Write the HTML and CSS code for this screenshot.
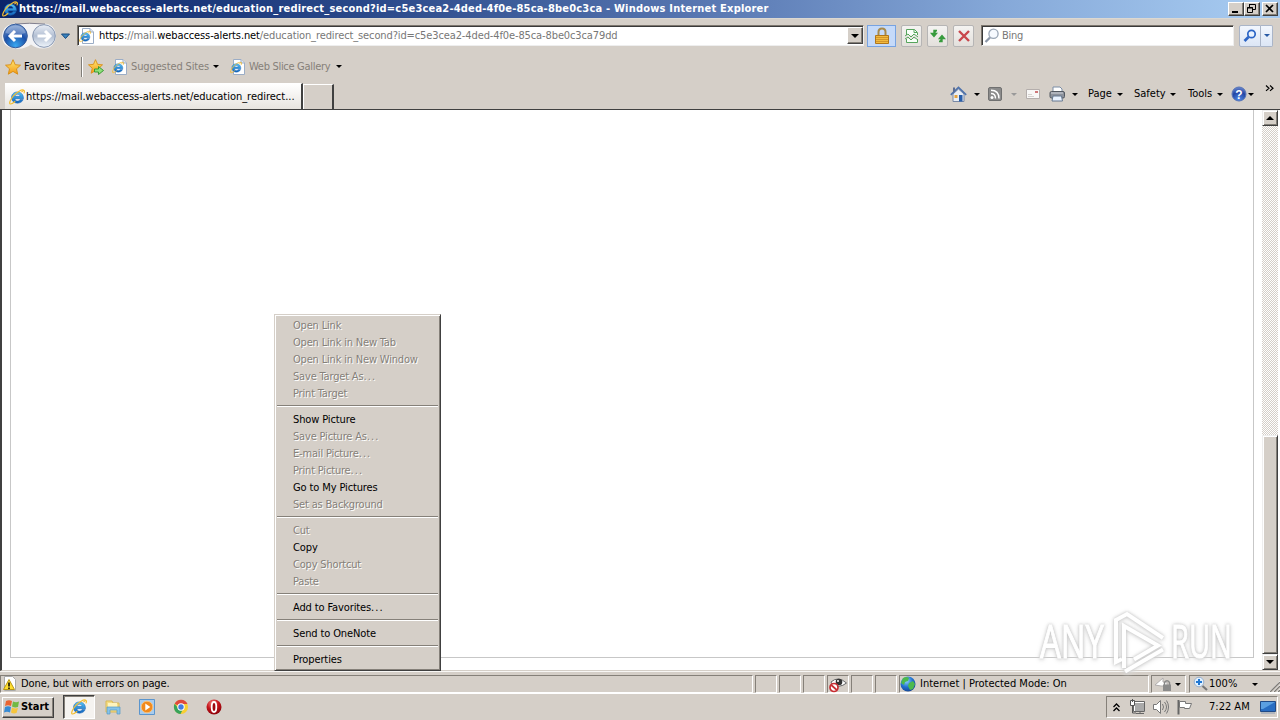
FILE: index.html
```html
<!DOCTYPE html>
<html lang="en">
<head>
<meta charset="utf-8">
<title>Windows Internet Explorer</title>
<link rel="stylesheet" href="styles.css">
</head>
<body>
<svg class="defs" aria-hidden="true">
  <defs>
    <linearGradient id="eBlue" x1="0" y1="0" x2="0" y2="1"><stop offset="0" stop-color="#54c4f6"/><stop offset="1" stop-color="#1263bd"/></linearGradient>
    <radialGradient id="backBlue" cx=".5" cy=".9" r=".9"><stop offset="0" stop-color="#38a7f0"/><stop offset=".55" stop-color="#1c50a8"/><stop offset="1" stop-color="#7d9fd2"/></radialGradient>
    <linearGradient id="fwdGrey" x1="0" y1="0" x2="0" y2="1"><stop offset="0" stop-color="#e9eef6"/><stop offset=".5" stop-color="#b3bfd3"/><stop offset="1" stop-color="#eff5fb"/></linearGradient>
    <linearGradient id="gold" x1="0" y1="0" x2="0" y2="1"><stop offset="0" stop-color="#ffe873"/><stop offset="1" stop-color="#f39a16"/></linearGradient>
    <radialGradient id="globe" cx=".4" cy=".3" r=".8"><stop offset="0" stop-color="#8fd4ff"/><stop offset=".5" stop-color="#2272cf"/><stop offset="1" stop-color="#103a85"/></radialGradient>
    <radialGradient id="helpBlue" cx=".5" cy=".9" r=".9"><stop offset="0" stop-color="#4f8be8"/><stop offset=".6" stop-color="#2346a5"/><stop offset="1" stop-color="#6f8bd0"/></radialGradient>
    <radialGradient id="operaRed" cx=".4" cy=".25" r=".8"><stop offset="0" stop-color="#f4807c"/><stop offset=".5" stop-color="#c4141b"/><stop offset="1" stop-color="#850007"/></radialGradient>
    <symbol id="ie" viewBox="0 0 16 16">
      <path d="M14.500 9.700H6c.2 3 3.900 3.100 5 .9h3.200C12.200 16 2.500 15.300 2.500 8.600 2.500.9 14.900.8 14.500 9.700zM6 7.300h5c-.2-2.600-4.700-2.600-5 0z" fill="url(#eBlue)" stroke="#1763b4" stroke-width=".5"/>
      <path d="M12.400 3.200C15 .6 16.200.9 14.900 4.400M4.300 7C1.200 10.900-.1 14.300 1.200 14.900c1 .4 3-.9 5-2.700M4.300 7C7.500 3.300 13.200-.4 14.900 1.500" fill="none" stroke="#f3bd32" stroke-width="1.200"/>
    </symbol>
    <symbol id="iepage" viewBox="0 0 16 16"><path d="M3.500.5H11l3.500 3.500v11.500h-11z" fill="#fff" stroke="#9badc6"/><path d="M11 .5V4h3.500" fill="#dce5f2" stroke="#9badc6"/><use href="#ie" x="0" y="2.500" width="12" height="12"/></symbol>
    <symbol id="star" viewBox="0 0 16 16"><path d="M8 .7l2.200 5 5.300.5-4 3.600 1.200 5.400L8 12.400l-4.700 2.800 1.200-5.400-4-3.600 5.300-.5z" fill="url(#gold)" stroke="#d78c13" stroke-width=".9"/></symbol>
  </defs>
</svg>

<header class="titlebar">
  <svg class="i16"><use href="#ie"/></svg>
  <h1 class="title">https://mail.webaccess-alerts.net/education_redirect_second?id=c5e3cea2-4ded-4f0e-85ca-8be0c3ca - Windows Internet Explorer</h1>
  <div class="winbtns">
    <span class="winbtn"><svg width="13" height="11"><path d="M3 8h6v2H3z"/></svg></span>
    <span class="winbtn"><svg width="13" height="11"><path d="M4.500 1v3M4 1.500h6.500v5H8M2.500 4.500h5v5h-5zM2 5h6" fill="none" stroke="#000"/></svg></span>
    <span class="winbtn last"><svg width="13" height="11"><path d="M3 2l7 7M10 2L3 9" stroke="#000" stroke-width="1.700"/></svg></span>
  </div>
</header>

<nav class="navbar">
  <svg class="travel" width="74" height="28" viewBox="0 0 74 28">
    <path d="M15 1.500h27q12 0 13 12-1 13-13 13-7 0-12-4-6 5-16 4Q1 25 1 14 2 2 15 1.500z" fill="#f3f3f5"/><path d="M14 2Q28 .5 44 2" stroke="#817f8e" fill="none"/>
    <circle cx="14.500" cy="14" r="11.800" fill="url(#backBlue)" stroke="#345b9b"/><path d="M4.500 11Q6.500 3.500 14.500 3.500T24.500 11Q14.500 14 4.500 11z" fill="#fff" opacity=".28"/>
    <path d="M21 14H9.500M14 9l-5 5 5 5" fill="none" stroke="#fff" stroke-width="3"/>
    <circle cx="43" cy="14" r="11.300" fill="url(#fwdGrey)" stroke="#8796b0"/>
    <path d="M36.500 14h12M44 9l5 5-5 5" fill="none" stroke="#fff" stroke-width="3"/>
    <path d="M60.500 12h8l-4 4.500z" fill="#3a83bd" stroke="#174a80"/>
  </svg>
  <div class="address">
    <svg class="i16"><use href="#iepage"/></svg>
    <span class="url"><b>https</b>://mail.<b>webaccess-alerts.net</b>/education_redirect_second?id=c5e3cea2-4ded-4f0e-85ca-8be0c3ca79dd</span>
    <span class="drop"><i class="tri big"></i></span>
  </div>
  <span class="lock"><svg width="16" height="18" viewBox="0 0 16 18"><path d="M4.500 9V5Q4.500 1.500 8 1.500T11.500 5v4" fill="none" stroke="#a88a4c" stroke-width="2"/><path d="M1.500 8.500h13v8h-13z" fill="#f2bb3f" stroke="#b1761a"/><path d="M2 10.500h12M2 12.500h12M2 14.500h12" stroke="#d2952c"/></svg></span>
  <span class="tool"><svg width="16" height="16"><path d="M2.500 7V1.500h8l3 3V7M2.500 11v3.500h11V11" fill="#f8fff8" stroke="#56a45c"/><path d="M1 8l3-2 3 3 3-3 4 3M1 11l3-2 3 3 3-3 4 3M10 1.500v3h3" fill="none" stroke="#56a45c"/></svg></span>
  <span class="tool"><svg width="18" height="16"><path d="M8 2.500H5V7M2.500 5.500L5 8.500l2.500-3zM10 13.500h3V9M10.500 10.500l2.500-3 2.500 3z" fill="#379b3d" stroke="#379b3d" stroke-width="1.400"/></svg></span>
  <span class="tool"><svg width="16" height="16"><path d="M3 3l10 10M13 3L3 13" stroke="#c9474c" stroke-width="2.400"/></svg></span>
  <div class="search"><svg width="16" height="16"><circle cx="9.500" cy="5.800" r="4.600" fill="#f7faff" stroke="#9aa6b6" stroke-width="1.300"/><path d="M6 9.500L1.500 14" stroke="#8c97a8" stroke-width="2.300"/></svg><span>Bing</span></div>
  <span class="go"><svg width="16" height="16"><circle cx="9.500" cy="6" r="3.700" fill="#e8f2ff" stroke="#2b64c5" stroke-width="1.700"/><path d="M6.500 9L2.500 13" stroke="#2b64c5" stroke-width="2.600"/></svg></span>
  <span class="godrop"><i class="tri blue"></i></span>
</nav>

<div class="favbar">
  <svg class="i16"><use href="#star"/></svg><span class="favlabel">Favorites</span>
  <i class="vline"></i>
  <svg class="i16 addfav"><use href="#star" width="15" height="15"/><path d="M6.500 10h4V7.500l5 4-5 4V13h-4z" fill="#8fe07a" stroke="#2f942c" stroke-width=".9"/></svg>
  <svg class="i16 sug"><use href="#iepage"/></svg><span class="link l1">Suggested Sites</span><i class="tri"></i>
  <svg class="i16 slice"><use href="#iepage"/></svg><span class="link l2">Web Slice Gallery</span><i class="tri"></i>
</div>

<div class="tabrow">
  <div class="tab"><svg class="i16"><use href="#ie"/></svg><span>https://mail.webaccess-alerts.net/education_redirect...</span></div>
  <div class="newtab"></div>
  <div class="commands">
    <svg class="home" width="17" height="17" viewBox="0 0 17 17"><path d="M3 8v7.500h11V8L8.500 3z" fill="#e9eef5" stroke="#7888a5"/><path d="M.8 8.800L8.500 1.500l7.700 7.300" fill="none" stroke="#4f73ac" stroke-width="1.700"/><path d="M3 1.500h2V5L3 6.500z" fill="#5c6d92"/><path d="M4.500 9h3v3h-3z" fill="#e7a33b"/><path d="M9 9h3.500v6.500H9z" fill="#285eaa"/></svg><i class="tri t1"></i>
    <svg class="rss" width="15" height="15"><rect x=".5" y=".5" width="13" height="13" rx="1.500" fill="#8b8b8b" stroke="#707070"/><circle cx="4" cy="10.500" r="1.500" fill="#fff"/><path d="M3 6.500q4.500 0 4.500 5M3 3.200q8 0 8 8.300" fill="none" stroke="#fff" stroke-width="1.400"/></svg><i class="tri grey t2"></i>
    <svg class="mail" width="15" height="11"><path d="M.5.5h13v9H.5z" fill="#f8f7f6" stroke="#b4aeac"/><path d="M2 7.500h6M2 5.500h4" stroke="#d5d1ce"/><path d="M9 2h3v2H9z" fill="#cf7778"/></svg>
    <svg class="print" width="17" height="16"><path d="M4 7V1h7l2 2v4" fill="#fff" stroke="#7b8da6"/><rect x="1" y="5.500" width="14.500" height="6.500" rx="1.500" fill="#8d929c" stroke="#525861"/><path d="M2 7h12" stroke="#d1d5dc"/><path d="M4 10h8.500l1 5H3z" fill="#e9f2ff" stroke="#667990"/></svg><i class="tri t3"></i>
    <span class="cmd page">Page</span><i class="tri t4"></i><span class="cmd safety">Safety</span><i class="tri t5"></i><span class="cmd tools">Tools</span><i class="tri t6"></i>
    <svg class="help" width="16" height="16"><circle cx="8" cy="8" r="7" fill="url(#helpBlue)" stroke="#5573b6"/><text x="8" y="12.500" class="q">?</text></svg><i class="tri t7"></i>
    <svg class="more" width="9" height="7"><path d="M1 .5l3 2.700-3 2.700M5 .5l3 2.700-3 2.700" fill="none" stroke="#000" stroke-width="1.200"/></svg>
  </div>
</div>

<main class="view">
  <div class="frame"></div>
  <div class="scroll"><span class="sbtn"><i class="tri big up"></i></span><span class="track"></span><span class="thumb"></span><span class="sbtn"><i class="tri big"></i></span></div>
  <svg class="watermark" width="212" height="72" viewBox="0 0 212 72">
    <g class="wm"><text x="7" y="50" textLength="64" lengthAdjust="spacingAndGlyphs">ANY</text><text x="138" y="50" textLength="61" lengthAdjust="spacingAndGlyphs">RUN</text>
    <path d="M89 51l-6 3V12L94 6l36 24M91 60V18l34 19.500-24 14M92 63.500l38-22"/></g>
  </svg>
</main>

<footer class="status">
  <div class="pane p0"><svg class="i16"><path d="M2.500.5h8l3 3v11h-11z" fill="#fff" stroke="#aaa"/><path d="M7 3.500l5.500 10h-11z" fill="#ffdf2f" stroke="#b99613"/><path d="M7 6.500v4M7 11.500V13" stroke="#000" stroke-width="1.500"/></svg><span class="s-done">Done, but with errors on page.</span></div>
  <div class="pane sm"></div><div class="pane sm"></div><div class="pane sm"></div>
  <div class="pane sm"><svg width="20" height="17"><path d="M3 6Q10-.5 18.500 7 11 13 4 8z" fill="#fff" stroke="#666"/><circle cx="11" cy="6" r="3.300" fill="#333"/><circle cx="10" cy="5" r="1" fill="#fff"/><circle cx="6" cy="11.500" r="4" fill="#fff" stroke="#c82e33" stroke-width="1.700"/><path d="M3.200 9l5.600 5" stroke="#c82e33" stroke-width="1.700"/></svg></div>
  <div class="pane sm"></div><div class="pane sm"></div>
  <div class="pane zone"><svg class="i16"><circle cx="8" cy="8" r="7.500" fill="url(#globe)"/><path d="M3 2q4-2 6 0L8 5 5 6 4 9 1 7zM9 7l4-2 2 3-2 5-3 1-2-4z" fill="#4bb94d"/></svg><span class="s-zone">Internet | Protected Mode: On</span></div>
  <div class="pane prot"><svg width="18" height="16"><path d="M0 9l8-7v4h4v4H6z" fill="#fff" stroke="#b0adad"/><path d="M9.500 9V6.500Q12 3 14.500 6.500V9" fill="none" stroke="#888" stroke-width="1.400"/><path d="M8 8.500h8V15H8z" fill="#8b8b8b"/></svg><i class="tri"></i></div>
  <div class="pane zoom"><svg class="i16"><circle cx="6" cy="6" r="4.800" fill="#e0f0ff" stroke="#9aafc9"/><path d="M6 3v6M3 6h6" stroke="#2378d2" stroke-width="2"/><path d="M9.500 10l4.500 4" stroke="#777" stroke-width="2.200"/></svg><span>100%</span><i class="tri"></i>
    <svg class="grip" width="12" height="12"><path d="M1 12L12 1M5 12l7-7M9 12l3-3" stroke="#fff" /><path d="M2 12L12 2M6 12l6-6M10 12l2-2" stroke="#7f7c77" stroke-width="1.400"/></svg></div>
</footer>

<footer class="taskbar">
  <div class="start"><svg width="17" height="16"><path d="M2 2q3-1.500 6 0L7 7Q4 5.500 1 7z" fill="#ea6431"/><path d="M9 2.500q3 1.500 6 0L14 8q-3 1-6-.5z" fill="#72b942"/><path d="M1 8q3-1.500 6 0l-1 5.500q-3-1.500-6 0z" fill="#378bd4"/><path d="M8 8.500q3 1.500 6 .5l-1.500 5q-3 1-5.500-.5z" fill="#f6c53c"/></svg><b>Start</b></div>
  <div class="active"><svg class="i16"><use href="#ie"/></svg></div>
  <svg class="i16 folder"><path d="M1 2h6l1 2h6v9H1z" fill="#f5dc82" stroke="#d9b957"/><path d="M3 4h9v5H3z" fill="#fff4bd"/><path d="M2 8h13v7h-3v-4H5v4H2z" fill="#86c3e9" stroke="#5498c5" stroke-width=".7"/></svg>
  <svg class="i16 wmp"><path d="M.5.5h15v15H.5z" fill="#a9cced" stroke="#5b95cd"/><circle cx="8" cy="8" r="5.800" fill="#f18a1d" stroke="#f9c078"/><path d="M6.300 4.500v7l5-3.500z" fill="#fff"/></svg>
  <svg class="i16 chrome" viewBox="0 0 16 16"><circle cx="8" cy="8" r="7" fill="#f8cf32"/><path d="M8 8L1.700 4.700A7 7 0 0 1 14.500 5H8z" fill="#df493c"/><path d="M1.700 4.700A7 7 0 0 0 7.500 15l3-6L5 9z" fill="#38a35a"/><circle cx="8" cy="8" r="3.700" fill="#fff"/><circle cx="8" cy="8" r="2.700" fill="#437de1"/></svg>
  <svg class="i16 opera" viewBox="0 0 16 16"><circle cx="8" cy="8" r="7.500" fill="url(#operaRed)"/><ellipse cx="8" cy="8" rx="2.300" ry="5" fill="#9d0a10" stroke="#fff" stroke-width="1.800"/></svg>
  <div class="tray">
    <svg class="chev" width="7" height="9"><path d="M.5 4l3-3 3 3M.5 8l3-3 3 3" fill="none" stroke="#000" stroke-width="1.300"/></svg>
    <svg class="net" width="17" height="16"><path d="M5.500 3.500h10v9h-10z" fill="#aaa" stroke="#fff"/><path d="M4.500 2.500h11v10h-11zM7 14.500h8M11 12v3" fill="none" stroke="#666"/><path d="M1.500 1.500h4v5h-4z" fill="#fff" stroke="#555"/><path d="M3.500 6v8H7M3.500 0v3" fill="none" stroke="#555"/></svg>
    <svg class="vol" width="18" height="16"><path d="M1.500 5.500h3l4-4v13l-4-4h-3z" fill="#fff" stroke="#777"/><path d="M10.500 5q2 3 0 6M12.500 3q4 5 0 10M14.500 1.500q4 6.500 0 13" fill="none" stroke="#777"/></svg>
    <svg class="flag" width="17" height="16"><path d="M2.500 1v14.500" stroke="#666" stroke-width="2"/><path d="M3.500 2.500h6v2h6l-2 5h-5v-1h-5z" fill="#fff" stroke="#777"/></svg>
    <span class="clock">7:22 AM</span>
    <svg class="desk" width="16" height="13"><path d="M.5.5h15v10H.5z" fill="#286dc2" stroke="#204a87"/><path d="M1 1h14L3 8H1z" fill="#5b9fe1"/><path d="M1 12h14" stroke="#8b9cb3"/></svg>
  </div>
</footer>

<ul class="menu">
  <li class="off">Open Link</li><li class="off">Open Link in New Tab</li><li class="off">Open Link in New Window</li><li class="off">Save Target As<span class="dots">...</span></li><li class="off">Print Target</li>
  <li class="sep"></li>
  <li>Show Picture</li><li class="off">Save Picture As<span class="dots">...</span></li><li class="off">E-mail Picture<span class="dots">...</span></li><li class="off">Print Picture<span class="dots">...</span></li><li>Go to My Pictures</li><li class="off">Set as Background</li>
  <li class="sep"></li>
  <li class="off">Cut</li><li>Copy</li><li class="off">Copy Shortcut</li><li class="off">Paste</li>
  <li class="sep"></li><li>Add to Favorites<span class="dots">...</span></li>
  <li class="sep"></li><li>Send to OneNote</li>
  <li class="sep"></li><li>Properties</li>
</ul>
</body>
</html>
```
FILE: styles.css
```css
* { box-sizing: border-box; }
body { margin: 0; width: 1280px; height: 720px; overflow: hidden; display: flex; flex-direction: column; background: #d5cfc8; color: #000; font: 11px/14px "DejaVu Sans Condensed", "DejaVu Sans", sans-serif; font-stretch: condensed; white-space: nowrap; position: relative; }
svg { display: block; flex: none; }
.defs { position: absolute; width: 0; height: 0; }
.i16 { width: 16px; height: 16px; }

.titlebar { height: 18px; flex: none; display: flex; align-items: center; padding: 0 2px; background: linear-gradient(90deg, #0a246a 0%, #294889 28%, #5675b0 54%, #85a8d8 78%, #a6caf0 98%); }
.title { margin: 0 auto 0 1px; font-size: 11px; line-height: 16px; color: #fff; letter-spacing: .2px; }
.winbtns { display: flex; }
.winbtn { width: 16px; height: 14px; border: 1px solid; border-color: #fff #404040 #404040 #fff; background: #d5cfc8; box-shadow: inset -1px -1px #858078; }
.winbtn.last { margin-left: 2px; }

.navbar { height: 36px; flex: none; display: flex; align-items: center; padding: 0 0 2px 1px; border-top: 1px solid #dcd8d1; }
.navbar > * { flex: none; }
.travel { margin-right: 2px; }
.address { width: 787px; height: 21px; display: flex; align-items: center; background: #fff; border: 1px solid; border-color: #7c766e #eee #eee #7c766e; box-shadow: inset 1px 1px #393939; padding-left: 1px; }
.url { margin-left: 4px; color: #777; letter-spacing: -.115px; }
.url b { color: #000; font-weight: normal; }
.drop { margin-left: auto; width: 16px; height: 17px; display: grid; place-items: center; background: #d5cfc8; border: 1px solid; border-color: #fff #444 #444 #fff; box-shadow: inset -1px -1px #858078; }
.tri { flex: none; border: 3px solid transparent; border-top-color: #000; border-bottom: 0; width: 0; height: 0; }
.tri.big { border-width: 4px 4px 0; }
.tri.up { transform: scaleY(-1); }
.tri.blue { border-top-color: #285aa5; }
.tri.grey { border-top-color: #999; }
.lock { width: 29px; height: 22px; margin: 0 5px 0 3px; display: grid; place-items: center; background: #c5daf9; border: 1px solid #77a3e1; }
.tool { width: 21px; height: 22px; margin-right: 5px; display: grid; place-items: center; background: linear-gradient(#f4f3f1, #e3e0dc); border: 1px solid #b6b5b5; border-radius: 2px; }
.search { width: 253px; height: 21px; margin: 0 5px 0 2px; display: flex; align-items: center; background: #fff; color: #777; border: 1px solid; border-color: #7c766e #eee #eee #7c766e; box-shadow: inset 1px 1px #393939; padding-left: 2px; }
.search span { margin-left: 2px; letter-spacing: -.3px; }
.go, .godrop { height: 22px; display: grid; place-items: center; background: linear-gradient(#f2f6fd, #dce6f5); border: 1px solid #aab5c8; }
.go { width: 22px; border-radius: 2px 0 0 2px; }
.godrop { width: 12px; border-left: 0; border-radius: 0 2px 2px 0; }

.favbar { height: 27px; flex: none; display: flex; align-items: center; padding: 0 5px 2px; }
.favlabel { margin-left: 3px; width: 57px; letter-spacing: .15px; }
.vline { width: 2px; height: 20px; border-left: 1px solid #807d77; border-right: 1px solid #fff; margin-right: 5px; }
.sug { margin: 0 3px 0 8px; }
.slice { margin: 0 3px 0 11px; }
.link { color: #858079; }
.l1 { width: 82px; letter-spacing: -.12px; }
.l2 { width: 87px; letter-spacing: -.3px; }

.tabrow { height: 28px; flex: none; display: flex; align-items: flex-end; padding-left: 5px; }
.tab { width: 298px; height: 26px; display: flex; align-items: center; padding-left: 4px; background: linear-gradient(#fff, #e7e4df); border-right: 2px solid #404040; border-top: 1px solid #fff; }
.tab span { margin-left: 1px; letter-spacing: -.02px; }
.newtab { width: 31px; height: 25px; border: 1px solid #fff; border-right: 2px solid #404040; border-bottom: 0; }
.commands { align-self: flex-start; height: 26px; display: flex; align-items: center; margin-left: 616px; }
.t1 { margin: 0 8px 0 7px; }
.t2 { margin: 0 9px 0 8px; }
.mail { margin-right: 8px; }
.t3 { margin: 0 10px 0 6px; }
.page { width: 29px; } .safety { width: 36px; } .tools { width: 29px; }
.t4 { margin-right: 11px; } .t5 { margin-right: 12px; }
.t6 { margin-right: 8px; }
.t7 { margin-left: 1px; }
.more { margin: -12px 0 0 11px; }
.q { font: bold 12px "Liberation Sans", sans-serif; fill: #fff; text-anchor: middle; }

.view { height: 562px; flex: none; display: flex; background: #fff; border-top: 1px solid #404040; border-left: 2px solid #404040; border-bottom: 1px solid #d5cfc8; position: relative; padding-left: 8px; }
.frame { width: 1244px; height: 548px; border: 1px solid #c7c7c7; border-top: 0; }
.scroll { width: 16px; margin-left: 8px; display: flex; flex-direction: column; background: repeating-conic-gradient(#d5cfc8 0 25%, #fff 0 50%) 0 0 / 2px 2px; }
.sbtn { height: 16px; flex: none; display: grid; place-items: center; }
.sbtn, .thumb { background: #d5cfc8; border: 1px solid; border-color: #eee #404040 #404040 #eee; box-shadow: inset 1px 1px #fff, inset -1px -1px #827e77; }
.track { height: 309px; }
.thumb { height: 219px; }
.watermark { position: absolute; left: 1031px; top: 498px; overflow: visible; }
.wm { fill: #fff; filter: drop-shadow(0 0 1.5px #c4c4c4) drop-shadow(0 1px 2px #ddd); }
.wm text { font: 46px "Open Sans", sans-serif; stroke: #fff; stroke-width: 1px; }
.wm path { fill: none; stroke: #fff; stroke-width: 4px; }

.status { height: 22px; flex: none; display: flex; gap: 2px; padding: 3px 0 0; border-top: 1px solid #f8f7f5; }
.pane { height: 18px; flex: none; display: flex; align-items: center; border: 1px solid; border-color: #858079 #fff #fff #858079; }
.p0 { width: 753px; padding-left: 1px; }
.sm { width: 22px; }
.p0 span { margin-left: 3px; letter-spacing: -.1px; }
.zone { width: 250px; }
.zone span { margin-left: 4px; }
.prot { width: 35px; padding-left: 3px; }
.prot .tri { margin-left: 2px; }
.zoom { width: 91px; padding-left: 3px; margin-left: 1px; border-right: 0; }
.zoom span { width: 43px; }
.grip { margin: 4px 0 0 10px; }

.taskbar { height: 27px; flex: none; display: flex; align-items: center; border-top: 1px solid #fff; padding: 0 2px; }
.start { width: 52px; height: 21px; display: flex; align-items: center; padding-left: 1px; border: 1px solid; border-color: #fff #404040 #404040 #fff; box-shadow: inset -1px -1px #858079; }
.start b { letter-spacing: -.05px; }
.active { width: 32px; height: 24px; margin-left: 9px; display: grid; place-items: center; border: 1px solid; border-color: #404040 #fff #fff #404040; background: #f5f3f0; box-shadow: inset 1px 1px #858079; }
.folder { margin-left: 10px; }
.wmp { margin-left: 18px; }
.chrome { margin-left: 18px; }
.opera { margin-left: 17px; }
.tray { width: 172px; height: 22px; margin-left: auto; display: flex; align-items: center; padding-left: 6px; border: 1px solid; border-color: #858079 #fff #fff #858079; }
.net { margin-left: 9px; }
.vol { margin-left: 6px; }
.flag { margin-left: 6px; }
.clock { margin-left: 16px; width: 51px; }

.menu { position: absolute; left: 274px; top: 314px; width: 167px; height: 357px; margin: 0; padding: 2px 0 0; list-style: none; background: #d5cfc8; border: 1px solid; border-color: #d5cfc8 #404040 #404040 #d5cfc8; box-shadow: inset 1px 1px #fff, inset -1px -1px #858079; letter-spacing: -.12px; }
.menu li { height: 17px; line-height: 17px; padding-left: 18px; }
.menu .off { color: #858079; text-shadow: 1px 1px #fff; letter-spacing: -.18px; }
.menu .dots { letter-spacing: 1.1px; }
.menu .sep { height: 9px; padding: 0; margin: 0 2px; background: linear-gradient(#858079 0 1px, #fff 1px 2px) 0 3px / 100% 2px no-repeat; }
```
